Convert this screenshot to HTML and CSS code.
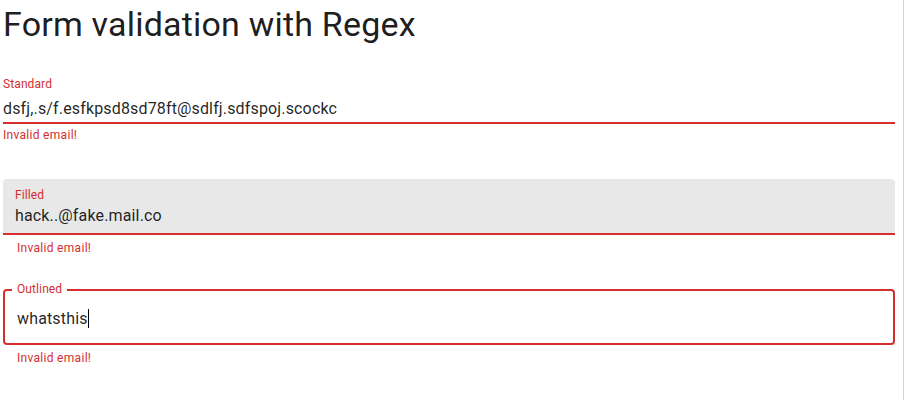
FILE: index.html
```html
<!DOCTYPE html>
<html lang="en">
<head>
<meta charset="utf-8">
<title>Form validation with Regex</title>
<link rel="stylesheet" href="styles.css">
</head>
<body>
<main class="page">
  <h1 class="title">Form validation with Regex</h1>

  <div class="field field-standard">
    <label class="label">Standard</label>
    <div class="control control-standard">
      <span class="value">dsfj,.s/f.esfkpsd8sd78ft@sdlfj.sdfspoj.scockc</span>
    </div>
    <p class="helper">Invalid email!</p>
  </div>

  <div class="field field-filled">
    <div class="control control-filled">
      <label class="label">Filled</label>
      <span class="value">hack..@fake.mail.co</span>
    </div>
    <p class="helper helper-inset">Invalid email!</p>
  </div>

  <div class="field field-outlined">
    <div class="control control-outlined">
      <label class="label label-notch">Outlined</label>
      <span class="value">whatsthis<span class="caret"></span></span>
    </div>
    <p class="helper helper-inset">Invalid email!</p>
  </div>
</main>
</body>
</html>
```

FILE: styles.css
```css
* {
  box-sizing: border-box;
}

html, body {
  margin: 0;
  padding: 0;
  background: #ffffff;
}

body {
  font-family: Roboto, "Liberation Sans", Arial, sans-serif;
  color: rgba(0, 0, 0, 0.87);
}

.page {
  width: 904px;
  height: 400px;
  padding: 3px 0 0 3px;
  border-right: 1px solid #d4d4d4;
  display: flex;
  flex-direction: column;
}

.title {
  margin: 0;
  font-size: 34px;
  font-weight: 400;
  line-height: 42px;
  letter-spacing: 0.2px;
  color: rgba(0, 0, 0, 0.9);
}

.field {
  width: 892px;
  display: flex;
  flex-direction: column;
}

.field-standard {
  margin-top: 31px;
}

.field-filled {
  margin-top: 34px;
}

.field-outlined {
  margin-top: 31px;
}

.label {
  display: block;
  font-size: 12px;
  line-height: 16px;
  color: #d32f2f;
  letter-spacing: 0.1px;
}

.value {
  font-size: 16px;
  line-height: 23px;
  color: rgba(0, 0, 0, 0.87);
  letter-spacing: 0.15px;
  white-space: nowrap;
}

.control-standard {
  height: 32px;
  padding-top: 5px;
  border-bottom: 2px solid #d32f2f;
  display: flex;
}

.control-filled {
  height: 56px;
  background: #e8e8e8;
  border-radius: 4px 4px 0 0;
  border-bottom: 2px solid #d32f2f;
  padding: 8px 12px 0;
  display: flex;
  flex-direction: column;
}

.control-filled .value {
  margin-top: 1px;
}

.control-outlined {
  position: relative;
  height: 56px;
  border: 2px solid #d32f2f;
  border-radius: 4px;
  padding: 16px 12px 0;
  display: flex;
  align-items: flex-start;
}

.label-notch {
  position: absolute;
  top: -10px;
  left: 7px;
  padding: 0 5px;
  background: #ffffff;
}

.caret {
  display: inline-block;
  width: 1px;
  height: 19px;
  background: #000000;
  vertical-align: -4px;
}

.helper {
  margin: 1px 0 0;
  font-size: 12px;
  line-height: 20px;
  color: #d32f2f;
  letter-spacing: 0.3px;
}

.helper-inset {
  margin: 3px 14px 0;
}
```
